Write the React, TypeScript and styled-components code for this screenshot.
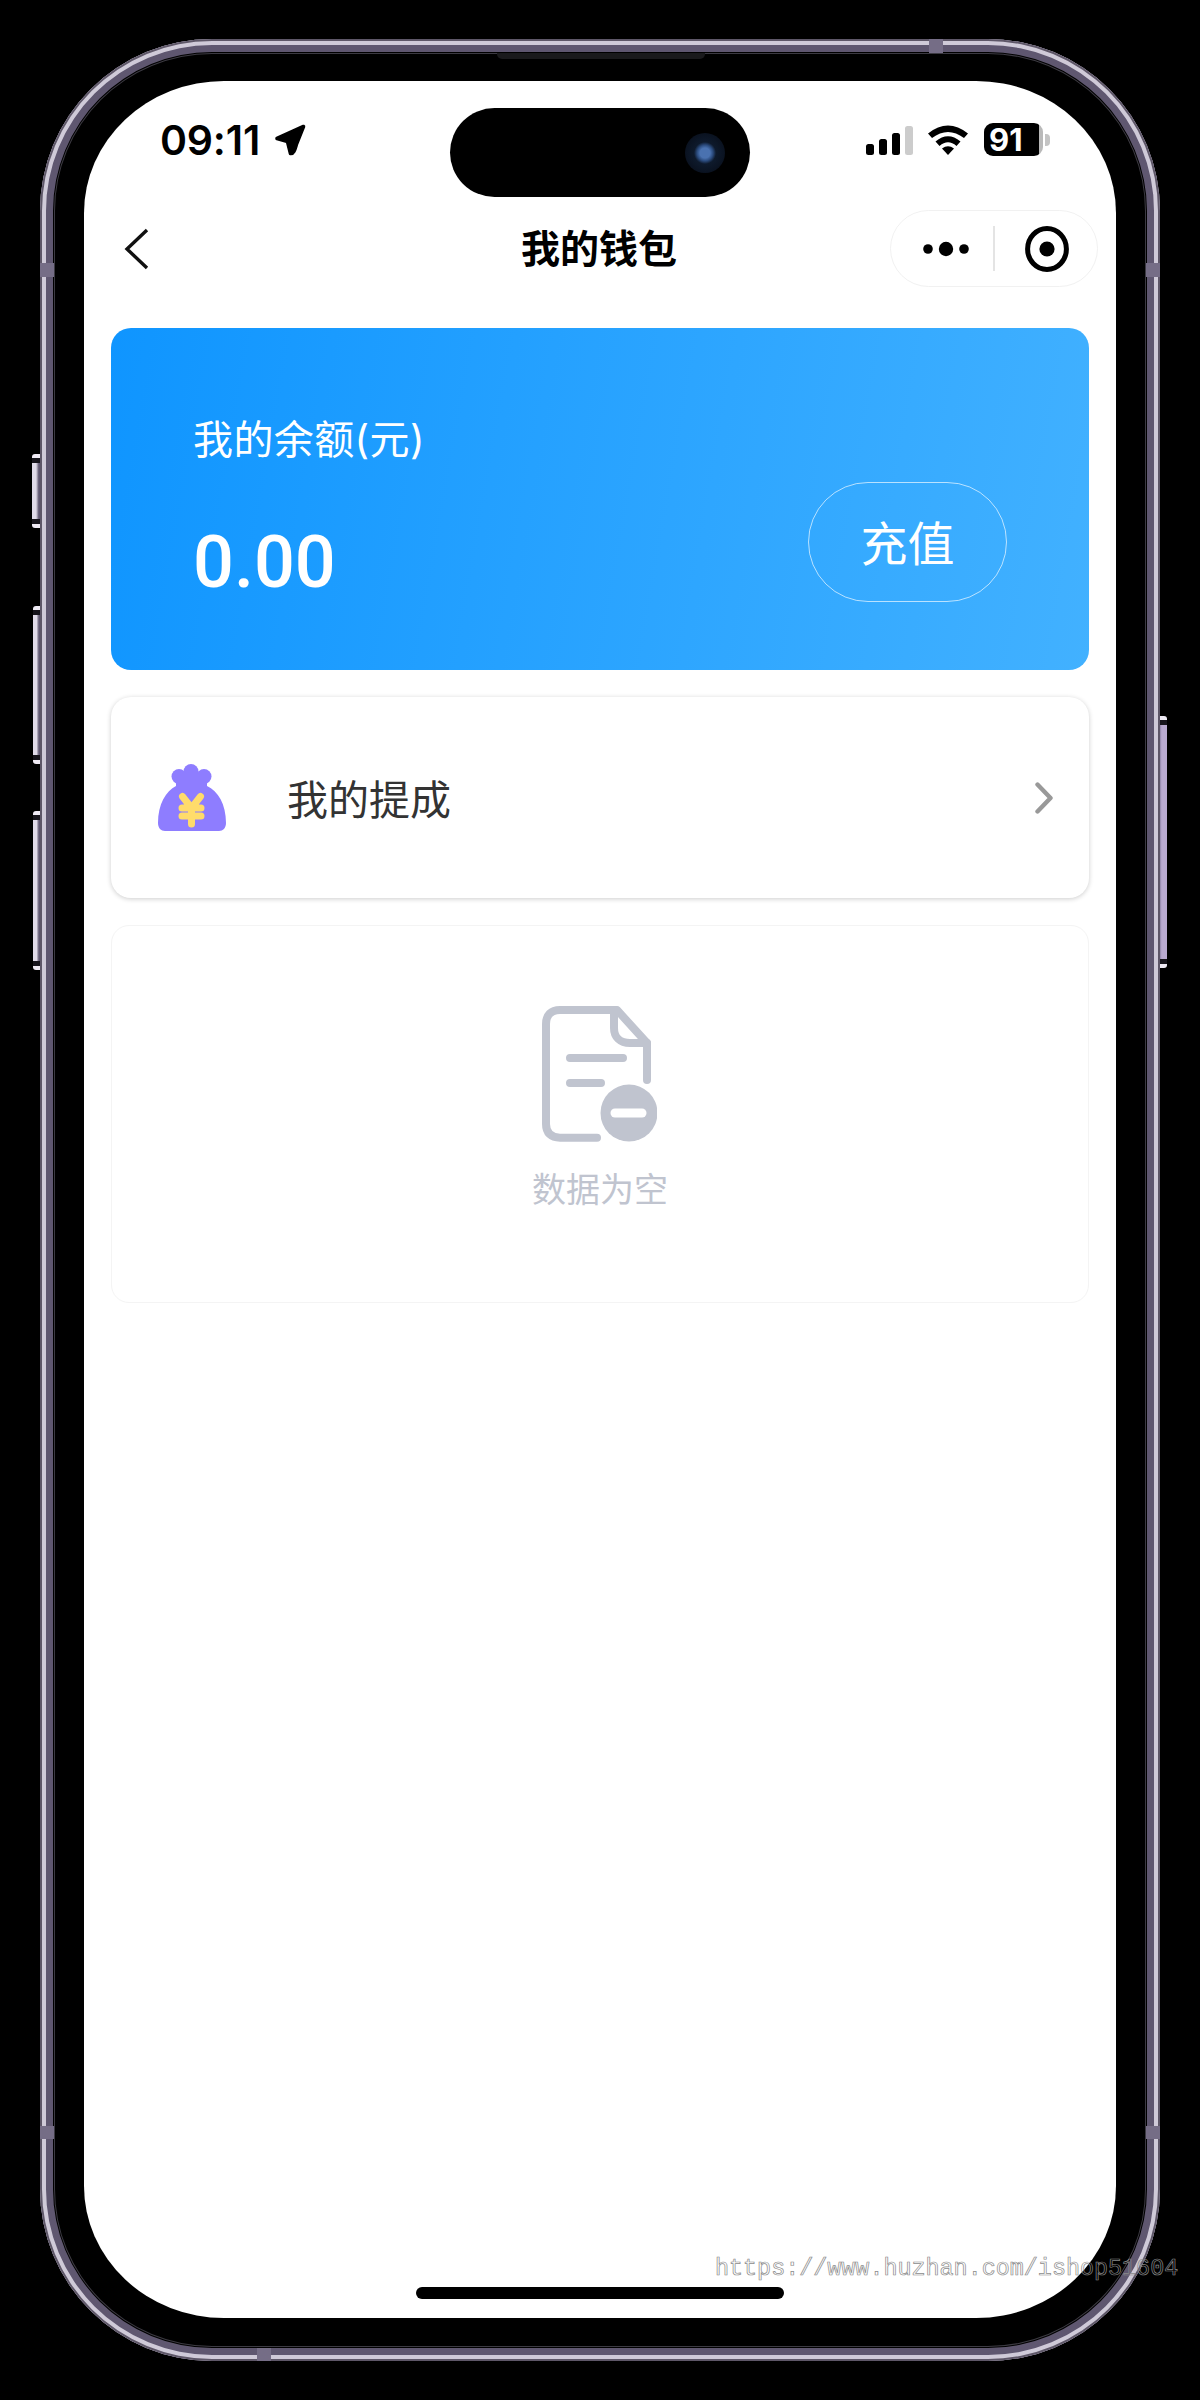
import React from "react";
import styled, { createGlobalStyle } from "styled-components";

const Global = createGlobalStyle`
  html, body { margin: 0; padding: 0; background: #000; }
  body { font-family: Inter, "Noto Sans CJK SC", sans-serif; }
  #root { width: 1200px; height: 2400px; overflow: hidden; background: #000; }
`;

const Frame = styled.div`
  position: relative;
  box-sizing: border-box;
  width: 1120px;
  height: 2322px;
  margin: 39px 0 0 40px;
  padding: 42px 44px 43px;
  border-radius: 172px;
  background: #000;
  box-shadow: inset 0 0 0 2px #5e5768, inset 0 0 0 6px #cfcad8, inset 0 0 0 13px #5f5770,
    inset 0 0 0 14px #000, inset 0 0 0 15px #3c3a42;
`;

const Band = styled.span<{ $x: number; $y: number; $w: number; $h: number }>`
  position: absolute;
  left: ${(p) => p.$x - 40}px;
  top: ${(p) => p.$y - 39}px;
  width: ${(p) => p.$w}px;
  height: ${(p) => p.$h}px;
  background: #756d86;
`;

const SideKey = styled.span<{ $x: number; $y: number; $w: number; $h: number; $right?: boolean }>`
  position: absolute;
  left: ${(p) => p.$x - 40}px;
  top: ${(p) => p.$y - 39}px;
  width: ${(p) => p.$w}px;
  height: ${(p) => p.$h}px;
  border-radius: ${(p) => (p.$right ? "0 3px 3px 0" : "3px 0 0 3px")};
  background:
    linear-gradient(180deg, #efeaf4 0 4px, #17151c 4px 9px, transparent 9px calc(100% - 9px), #17151c calc(100% - 9px) calc(100% - 4px), #efeaf4 calc(100% - 4px)),
    ${(p) =>
      p.$right
        ? "linear-gradient(270deg, #b9aad0 0 75%, #8f84a6 100%)"
        : "linear-gradient(90deg, #e0dbe9 0 50%, #5f5770 85%)"};
`;

const Speaker = styled.span`
  position: absolute;
  left: 457px;
  top: 14px;
  width: 208px;
  height: 6px;
  background: #1a1a1c;
  border-radius: 0 0 5px 5px;
`;

const Watermark = styled.span`
  position: absolute;
  left: 675px;
  top: 2215px;
  font: 400 23.4px/30px "Liberation Mono", monospace;
  color: transparent;
  -webkit-text-stroke: 0.7px #8a8a8a;
  white-space: nowrap;
`;

const Screen = styled.div`
  display: flex;
  flex-direction: column;
  height: 100%;
  background: #fff;
  border-radius: 140px / 132px;
  overflow: hidden;
`;

const StatusBar = styled.div`
  display: grid;
  grid-template-columns: 1fr 300px 1fr;
  height: 129px;
  flex: none;
`;

const StatusLeft = styled.div`
  display: flex;
  align-items: center;
  gap: 14px;
  height: 30px;
  margin-top: 44px;
  padding-left: 76px;
`;

const Clock = styled.span`
  font: 600 41px/30px Inter, sans-serif;
  letter-spacing: -0.2px;
  color: #000;
`;

const Island = styled.div`
  display: flex;
  align-items: center;
  justify-content: flex-end;
  box-sizing: border-box;
  height: 89px;
  margin-top: 27px;
  padding-right: 25px;
  background: #000;
  border-radius: 45px;
`;

const Camera = styled.span`
  width: 40px;
  height: 40px;
  border-radius: 50%;
  background: radial-gradient(circle, #4a72b0 0 5px, #2a4a7c 8px, #0e1a2c 11px, #0a1220 20px);
`;

const StatusRight = styled.div`
  display: flex;
  justify-content: flex-end;
  align-items: center;
  height: 33px;
  margin-top: 42px;
  padding-right: 66px;
`;

const Signal = styled.div`
  display: flex;
  align-items: flex-end;
  gap: 5px;
  height: 29px;
  margin: 2px 15px 0 0;
`;

const Bar = styled.span<{ $h: number; $off?: boolean }>`
  width: 8px;
  height: ${(p) => p.$h}px;
  border-radius: 2.5px;
  background: ${(p) => (p.$off ? "#cccccc" : "#000")};
`;

const Battery = styled.div`
  display: flex;
  align-items: center;
  box-sizing: border-box;
  width: 59px;
  height: 33px;
  margin-left: 16px;
  padding-left: 5px;
  border-radius: 9px;
  background: linear-gradient(90deg, #000 0 55px, #b9b9b9 55px);
  font: 700 31px/33px Inter, sans-serif;
  color: #fff;
`;

const BatteryNub = styled.span`
  width: 5px;
  height: 12px;
  margin-left: 2px;
  border-radius: 0 4px 4px 0;
  background: #c4c4c4;
`;

const Nav = styled.div`
  display: grid;
  grid-template-columns: 1fr auto 1fr;
  align-items: center;
  height: 77px;
  flex: none;
`;

const BackButton = styled.div`
  display: flex;
  padding-left: 40px;
`;

const Title = styled.h1`
  margin: 0 2px 0 0;
  padding-bottom: 5px;
  font: 700 39px/50px "Noto Sans CJK SC", sans-serif;
  color: #000;
`;

const Capsule = styled.div`
  justify-self: end;
  display: flex;
  align-items: center;
  box-sizing: border-box;
  width: 208px;
  height: 77px;
  margin-right: 18px;
  border: 1.5px solid #f1f1f1;
  border-radius: 39px;
`;

const CapsuleCell = styled.div`
  display: flex;
  flex: none;
  align-items: center;
  justify-content: center;
`;

const MoreCell = styled(CapsuleCell)`
  width: 104px;
  padding-left: 9px;
  box-sizing: border-box;
  height: 45px;
  border-right: 2px solid #e4e4e4;
`;

const TargetCell = styled(CapsuleCell)`
  flex: 1;
  padding-left: 1px;
`;

const Content = styled.main`
  display: flex;
  flex-direction: column;
  gap: 27px;
  padding: 41px 27px 0;
`;

const BalanceCard = styled.section`
  display: flex;
  justify-content: space-between;
  align-items: flex-end;
  box-sizing: border-box;
  height: 342px;
  padding: 0 82px 68px 82px;
  border-radius: 20px;
  background: linear-gradient(100deg, #0f95ff 0%, #42b1ff 100%);
  color: #fff;
`;

const BalanceInfo = styled.div`
  display: flex;
  flex-direction: column;
  gap: 59px;
  margin-bottom: 3px;
`;

const BalanceLabel = styled.div`
  font: 400 40px/56px Inter, "Noto Sans CJK SC", sans-serif;
  letter-spacing: 0.4px;
`;

const BalanceValue = styled.div`
  font: 500 72px/72px Roboto, sans-serif;
`;

const RechargeButton = styled.div`
  display: flex;
  align-items: center;
  justify-content: center;
  box-sizing: border-box;
  width: 199px;
  height: 120px;
  padding-bottom: 2px;
  border: 1.5px solid rgba(255, 255, 255, 0.65);
  border-radius: 60px;
  font: 400 47px/60px "Noto Sans CJK SC", sans-serif;
`;

const CommissionRow = styled.section`
  display: flex;
  align-items: center;
  box-sizing: border-box;
  height: 201px;
  padding: 0 36px 0 47px;
  border-radius: 20px;
  background: #fff;
  box-shadow: 0 1px 5px rgba(0, 0, 0, 0.2);
`;

const RowLabel = styled.span`
  flex: 1;
  margin-left: 61px;
  padding-bottom: 2px;
  font: 400 41px/56px "Noto Sans CJK SC", sans-serif;
  color: #333;
`;

const EmptyCard = styled.section`
  display: flex;
  flex-direction: column;
  align-items: center;
  box-sizing: border-box;
  height: 378px;
  padding-top: 80px;
  border: 1.5px solid #f4f4f4;
  border-radius: 18px;
`;

const EmptyIcon = styled.svg`
  margin-right: 2px;
`;

const EmptyText = styled.div`
  margin-top: 23px;
  font: 400 34px/46px "Noto Sans CJK SC", sans-serif;
  color: #c0c4cf;
`;

const HomeSlot = styled.div`
  display: flex;
  flex: 1;
  align-items: flex-end;
  justify-content: center;
  padding-bottom: 19px;
`;

const HomeBar = styled.span`
  width: 368px;
  height: 12px;
  border-radius: 6px;
  background: #000;
`;

export default function App() {
  return (
    <>
      <Global />
      <Frame>
        <SideKey $x={32} $y={454} $w={8} $h={74} />
        <SideKey $x={33} $y={606} $w={7} $h={158} />
        <SideKey $x={33} $y={811} $w={7} $h={159} />
        <SideKey $x={1160} $y={716} $w={7} $h={252} $right />
        <Band $x={929} $y={39} $w={14} $h={14} />
        <Band $x={40} $y={263} $w={14} $h={14} />
        <Band $x={1146} $y={263} $w={14} $h={14} />
        <Band $x={40} $y={2126} $w={14} $h={13} />
        <Band $x={1146} $y={2126} $w={14} $h={13} />
        <Band $x={257} $y={2348} $w={14} $h={13} />
        <Speaker />
        <Screen>
          <StatusBar>
            <StatusLeft>
              <Clock>09:11</Clock>
              <svg width="32" height="32" viewBox="0 0 32 32">
                <path d="M29.5 2.5 3 14.5 13.5 17.5 16.5 29.5C20 30 21 25 22.5 20Z" fill="#000" stroke="#000" strokeWidth="3.6" strokeLinejoin="round" />
              </svg>
            </StatusLeft>
            <Island>
              <Camera />
            </Island>
            <StatusRight>
              <Signal>
                <Bar $h={11} />
                <Bar $h={16} />
                <Bar $h={22} />
                <Bar $h={29} $off />
              </Signal>
              <svg width="40" height="30" viewBox="0 0 40 30">
                <path d="M0 8.5Q20-7.5 40 8.5L36 13Q20 1 4 13Z" fill="#000" />
                <path d="M7.5 16.5Q20 6 32.5 16.5L28.5 21Q20 13.5 11.5 21Z" fill="#000" />
                <path d="M14 23.5Q20 19 26 23.5L20 30Z" fill="#000" />
              </svg>
              <Battery>91</Battery>
              <BatteryNub />
            </StatusRight>
          </StatusBar>
          <Nav>
            <BackButton>
              <svg width="26" height="44" viewBox="0 0 26 44">
                <path d="M23 3 3 22 23 41" fill="none" stroke="#111" strokeWidth="3.4" />
              </svg>
            </BackButton>
            <Title>我的钱包</Title>
            <Capsule>
              <MoreCell>
                <svg width="48" height="20" viewBox="0 0 48 20">
                  <circle cx="5" cy="10" r="4.8" fill="#000" />
                  <circle cx="23" cy="10" r="7.2" fill="#000" />
                  <circle cx="41" cy="10" r="4.8" fill="#000" />
                </svg>
              </MoreCell>
              <TargetCell>
                <svg width="44" height="46" viewBox="0 0 44 46">
                  <ellipse cx="22" cy="23" rx="19.4" ry="20.4" fill="none" stroke="#000" strokeWidth="5" />
                  <circle cx="22" cy="23" r="7.6" fill="#000" />
                </svg>
              </TargetCell>
            </Capsule>
          </Nav>
          <Content>
            <BalanceCard>
              <BalanceInfo>
                <BalanceLabel>我的余额(元)</BalanceLabel>
                <BalanceValue>0.00</BalanceValue>
              </BalanceInfo>
              <RechargeButton>充值</RechargeButton>
            </BalanceCard>
            <CommissionRow>
              <svg width="68" height="67" viewBox="0 0 68 67">
                <circle cx="33" cy="7.5" r="7.5" fill="#8e7dff" />
                <circle cx="21" cy="12.5" r="7.5" fill="#8e7dff" />
                <circle cx="46" cy="12.5" r="7.5" fill="#8e7dff" />
                <path d="M18 10H49V22C60 27 68 40 68 59 68 64 65 67 61 67H7C3 67 0 64 0 59 0 40 8 27 18 22Z" fill="#8e7dff" />
                <path d="M24.5 32.5 33.5 44 42.5 32.5M33.5 44V60M24 44H43M24 52H43" fill="none" stroke="#ffdc6b" strokeWidth="7" strokeLinecap="round" strokeLinejoin="round" />
              </svg>
              <RowLabel>我的提成</RowLabel>
              <svg width="18" height="32" viewBox="0 0 18 32">
                <path d="M2.5 2.5 15.5 16 2.5 29.5" fill="none" stroke="#999" strokeWidth="4.4" strokeLinecap="round" strokeLinejoin="round" />
              </svg>
            </CommissionRow>
            <EmptyCard>
              <EmptyIcon width="115" height="136" viewBox="0 0 115 136">
                <path d="M55 131.7H18C9 131.7 4 127 4 118V18C4 9 9 4 18 4H75L105 37V74" fill="none" stroke="#c0c4cf" strokeWidth="8" strokeLinecap="round" strokeLinejoin="round" />
                <path d="M72 4V22C72 31 78 37 88 37H105" fill="none" stroke="#c0c4cf" strokeWidth="8" strokeLinecap="round" />
                <path d="M28 52H81M28 77H59" fill="none" stroke="#c0c4cf" strokeWidth="8" strokeLinecap="round" />
                <circle cx="87" cy="107" r="28.5" fill="#c0c4cf" />
                <path d="M73 107H100" fill="none" stroke="#fff" strokeWidth="9" strokeLinecap="round" />
              </EmptyIcon>
              <EmptyText>数据为空</EmptyText>
            </EmptyCard>
          </Content>
          <HomeSlot>
            <HomeBar />
          </HomeSlot>
        </Screen>
        <Watermark>https://www.huzhan.com/ishop51604</Watermark>
      </Frame>
    </>
  );
}
